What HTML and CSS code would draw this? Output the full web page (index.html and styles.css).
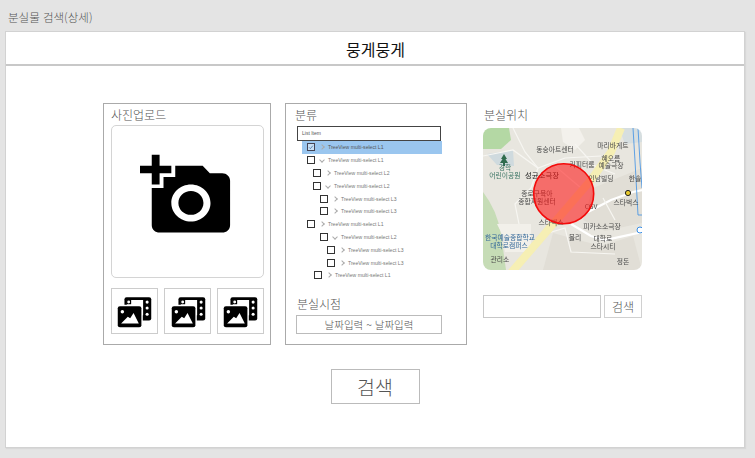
FILE: index.html
```html
<!DOCTYPE html>
<html lang="ko">
<head>
<meta charset="utf-8">
<title>분실물 검색(상세)</title>
<link rel="stylesheet" href="styles.css">
</head>
<body>
<div class="page-label">분실물 검색(상세)</div>
<main class="card">
  <header class="card-head">뭉게뭉게</header>
  <div class="panels">
    <section class="panel photo">
      <div class="title">사진업로드</div>
      <div class="upload">
        <svg class="camera" viewBox="0 0 24 24" preserveAspectRatio="none"><path d="M3 4V1h2v3h3v2H5v3H3V6H0V4h3zm3 6V7h3V4h7l1.83 2H21c1.1 0 2 .9 2 2v12c0 1.1-.9 2-2 2H5c-1.1 0-2-.9-2-2V10h3zm7 9c2.76 0 5-2.24 5-5s-2.24-5-5-5-5 2.24-5 5 2.24 5 5 5zm-3.2-5c0 1.77 1.43 3.2 3.2 3.2s3.2-1.43 3.2-3.2-1.43-3.2-3.2-3.2-3.2 1.43-3.2 3.2z"/></svg>
      </div>
      <div class="thumbs">
        <div class="thumb"><svg viewBox="0 0 47 46"><use href="#media"/></svg></div>
        <div class="thumb"><svg viewBox="0 0 47 46"><use href="#media"/></svg></div>
        <div class="thumb"><svg viewBox="0 0 47 46"><use href="#media"/></svg></div>
      </div>
    </section>

    <section class="panel category">
      <div class="title tight">분류</div>
      <div class="list-item">List Item</div>
      <div class="tree">
        <div class="row lv1 selected"><span class="box checked"><svg viewBox="0 0 8 8"><path d="M1.5 4.5l1.7 1.7 3.3-4" /></svg></span><span class="slot"><i class="chev right"></i></span><span>TreeView multi-select L1</span></div>
        <div class="row lv1"><span class="box"></span><span class="slot"><i class="chev down"></i></span><span>TreeView multi-select L1</span></div>
        <div class="row lv2"><span class="box"></span><span class="slot"><i class="chev right"></i></span><span>TreeView multi-select L2</span></div>
        <div class="row lv2"><span class="box"></span><span class="slot"><i class="chev down"></i></span><span>TreeView multi-select L2</span></div>
        <div class="row lv3"><span class="box"></span><span class="slot"><i class="chev right"></i></span><span>TreeView multi-select L3</span></div>
        <div class="row lv3"><span class="box"></span><span class="slot"><i class="chev right"></i></span><span>TreeView multi-select L3</span></div>
        <div class="row lv1"><span class="box"></span><span class="slot"><i class="chev right"></i></span><span>TreeView multi-select L1</span></div>
        <div class="row lv3"><span class="box"></span><span class="slot"><i class="chev down"></i></span><span>TreeView multi-select L2</span></div>
        <div class="row lv4"><span class="box"></span><span class="slot"><i class="chev right"></i></span><span>TreeView multi-select L3</span></div>
        <div class="row lv4"><span class="box"></span><span class="slot"><i class="chev right"></i></span><span>TreeView multi-select L3</span></div>
        <div class="row lv5"><span class="box"></span><span class="slot"><i class="chev right"></i></span><span>TreeView multi-select L1</span></div>
      </div>
      <div class="title when">분실시점</div>
      <div class="date-range">날짜입력 ~ 날짜입력</div>
    </section>

    <section class="location">
      <div class="title loc-title">분실위치</div>
      <div class="map">
        <svg viewBox="0 0 159 142">
          <rect class="m-land" width="159" height="142"/>
          <path class="m-block" d="M110 60L159 40V95L122 103L100 92Z"/>
          <path class="m-block" d="M70 105L118 118L150 108L159 142H60Z"/>
          <path class="m-green" d="M0 0H26L28 12L18 21H0Z"/>
          <path class="m-green2" d="M0 64Q14 82 18 106L23 142H0Z"/>
          <path class="m-water" d="M4 26L30 22L31 38L14 37Z"/>
          <path class="m-campus" d="M14 96H48V124H22L20 108Z"/>
          <path class="m-light" d="M78 0L96 0L102 12L92 22L80 14Z"/>
          <path class="m-tint" d="M136 0H159V14L142 16Z"/>
          <path class="m-road" d="M0 28L30 22L55 40L82 30L118 28"/>
          <path class="m-road" d="M30 0L42 24L55 40L48 60L32 76L36 96"/>
          <path class="m-road" d="M92 16L112 38L132 46"/>
          <path class="m-road" d="M72 38L98 60"/>
          <path class="m-road wide" d="M105 84L128 72L150 64L159 62"/>
          <path class="m-road wide" d="M88 96L108 108L122 112L159 104"/>
          <path class="m-road" d="M62 106L82 100L88 124L132 126"/>
          <path class="m-road" d="M120 70L132 92"/>
          <path class="m-yellow" d="M27 146L108 52L128 24L138 0"/>
          <path class="m-blue" d="M150 0L152 33L155 87H159"/>
          <path class="m-blue" d="M155 0L157 34L159 60"/>
          <circle class="m-pin" cx="157" cy="102" r="3"/>
          <path class="m-tree" d="M21 26l3 5h-1.500l2.500 4h-3v3h-2v-3h-3l2.500-4h-1.500z"/>
          <circle class="m-cafe" cx="145" cy="65" r="2.600"/>
          <text class="m-t" x="72" y="24">동숭아트센터</text>
          <text class="m-t" x="130" y="20">마리바게트</text>
          <text class="m-t" x="128" y="33">혜오름</text>
          <text class="m-t" x="128" y="40">예술극장</text>
          <text class="m-t" x="99" y="39">커피터룸</text>
          <text class="m-t" x="118" y="53">인남빌딩</text>
          <text class="m-t" x="152" y="53">한솔</text>
          <text class="m-t park" x="22" y="42">경학</text>
          <text class="m-t park" x="22" y="50">어린이공원</text>
          <text class="m-t strong" x="59" y="50">성균소극장</text>
          <text class="m-t" x="54" y="68">종로구육아</text>
          <text class="m-t" x="54" y="76">종합지원센터</text>
          <text class="m-t" x="108" y="81">CGV</text>
          <text class="m-t" x="143" y="77">스타벅스</text>
          <text class="m-t" x="68" y="97">스타벅스</text>
          <text class="m-t" x="119" y="101">피카소소극장</text>
          <text class="m-t campus" x="27" y="112">한국예술종합학교</text>
          <text class="m-t campus" x="26" y="120">대학로캠퍼스</text>
          <text class="m-t" x="92" y="112">몰리</text>
          <text class="m-t" x="120" y="113">대학로</text>
          <text class="m-t" x="120" y="121">스타시티</text>
          <text class="m-t" x="17" y="134">관리소</text>
          <text class="m-t" x="140" y="136">정돈</text>
          <circle class="m-area" cx="80.7" cy="65.7" r="30"/>
        </svg>
      </div>
      <div class="map-search">
        <input class="map-input" type="text" aria-label="분실위치">
        <button class="map-button" type="button">검색</button>
      </div>
    </section>
  </div>
  <div class="actions"><button class="search" type="button">검색</button></div>
</main>
<svg class="defs" aria-hidden="true">
  <defs>
    <g id="media">
      <rect x="13" y="8.500" width="28" height="24.500" rx="2.200"/>
      <rect class="cut" x="15.500" y="11.500" width="17" height="16"/>
      <rect x="15" y="11" width="5" height="5"/>
      <circle class="cut" cx="17.400" cy="13.600" r="1.500"/>
      <circle class="cut" cx="36.700" cy="13.700" r="1.600"/>
      <circle class="cut" cx="36.700" cy="19.800" r="1.600"/>
      <circle class="cut" cx="36.700" cy="26.300" r="1.600"/>
      <rect class="cut" x="4.500" y="16.500" width="27.700" height="25" rx="3"/>
      <rect x="6" y="18" width="24.700" height="22" rx="2.200"/>
      <circle class="cut" cx="10.800" cy="23.700" r="1.800"/>
      <path class="cut" d="M9.500 36L16.500 29L19 30.500L22.500 25L28 36Z"/>
    </g>
  </defs>
</svg>
</body>
</html>
```
FILE: styles.css
```css
* { box-sizing: border-box; }
html, body { height: 100%; }
body {
  margin: 0;
  padding: 0 10px 10px 5px;
  background: #e4e4e4;
  font-family: "Noto Sans CJK KR", "Liberation Sans", sans-serif;
  font-weight: 300;
  color: #555;
  overflow: hidden;
}
.page-label {
  height: 31px;
  padding: 9px 0 0 3px;
  font-size: 11.5px;
  line-height: 16px;
  color: #555;
}
.card {
  height: 417px;
  background: #fff;
  border: 1px solid #d2d2d2;
  box-shadow: 1px 1px 1px #d8d8d8;
}
.card-head {
  height: 34px;
  border-bottom: 2px solid #c8c8c8;
  padding-left: 1px;
  text-align: center;
  font-size: 16px;
  line-height: 34px;
  font-weight: 400;
  color: #111;
}
.panels {
  display: flex;
  align-items: flex-start;
  padding: 37px 0 0 97px;
}
.panel {
  height: 242px;
  border: 1px solid #aaa;
}
.title {
  font-size: 12px;
  line-height: 21px;
  color: #555;
}
.photo {
  width: 168px;
  padding: 0 6px 0 7px;
  margin-right: 14px;
}
.upload {
  height: 153px;
  border: 1px solid #d4d4d4;
  border-radius: 5px;
  display: flex;
  align-items: center;
  justify-content: center;
  padding: 0 1px 13px 0;
}
.camera { width: 94px; height: 89px; fill: #000; }
.thumbs {
  display: grid;
  grid-template-columns: repeat(3, minmax(0, 1fr));
  gap: 6px;
  margin-top: 10px;
}
.thumb { height: 46px; border: 1px solid #ccc; overflow: hidden; }
.thumb svg { display: block; width: 45px; height: 44px; }
.thumb:nth-child(2) svg { margin-left: 1px; }

.category {
  width: 182px;
  padding: 0 24px 0 11px;
  margin-right: 16px;
}
.tight { margin-left: -2px; line-height: 22px; }
.list-item {
  width: 144px;
  height: 15px;
  border: 1px solid #444;
  padding-left: 4px;
  font-family: "Liberation Sans", sans-serif;
  font-size: 5px;
  line-height: 13px;
  color: #555;
}
.tree { margin-left: 5px; width: 140px; }
.row {
  height: 12.8px;
  display: flex;
  align-items: center;
  font-family: "Liberation Sans", sans-serif;
  font-size: 5.1px;
  color: #777;
  white-space: nowrap;
}
.lv1 { padding-left: 5px; }
.lv2 { padding-left: 11px; }
.lv3 { padding-left: 18px; }
.lv4 { padding-left: 25px; }
.lv5 { padding-left: 12px; }
.selected { background: #9ac6ef; color: #555; }
.box { width: 8px; height: 8px; border: 1px solid #333; flex: none; }
.box svg { display: block; width: 6px; height: 6px; fill: none; stroke: #3f6f9f; stroke-width: 1; }
.checked { background: #c7dff5; border-color: #445; }
.slot { width: 13px; flex: none; display: flex; justify-content: center; align-items: center; }
.chev { display: block; width: 4px; height: 4px; border-top: 0.5px solid #aaa; border-right: 0.5px solid #aaa; }
.right { transform: rotate(45deg); }
.down { transform: rotate(135deg); }
.when { margin-top: 13px; line-height: 18px; }
.date-range {
  width: 146px;
  height: 19px;
  margin: 2px 0 0 -1px;
  border: 1px solid #bbb;
  text-align: center;
  font-size: 10.5px;
  line-height: 17px;
  color: #555;
}
.location { width: 159px; }
.loc-title { height: 25px; line-height: 24px; padding-left: 1px; }
.map {
  height: 142px;
  border-radius: 8px;
  overflow: hidden;
}
.map svg { display: block; width: 159px; height: 142px; filter: blur(0.45px); }
.m-land { fill: #e8e6df; }
.m-block { fill: #e1ded6; }
.m-green { fill: #b4d8a4; }
.m-green2 { fill: #c6dcb6; }
.m-water { fill: #cfdade; }
.m-campus { fill: #f2f0ea; }
.m-light { fill: #f3f1ec; }
.m-tint { fill: #d6dee0; }
.m-road { fill: none; stroke: #f7f6f2; stroke-width: 1.2; }
.wide { stroke-width: 2.2; stroke: #fff; }
.m-yellow { fill: none; stroke: #f6efb4; stroke-width: 8; }
.m-blue { fill: none; stroke: #3b8fe6; stroke-width: 0.8; }
.m-pin { fill: #fff; stroke: #3b8fe6; stroke-width: 1; }
.m-tree { fill: #2e6b4d; }
.m-cafe { fill: #e8c92c; stroke: #222; stroke-width: 1; }
.m-t {
  font-family: "Noto Sans CJK KR", sans-serif;
  font-size: 6.8px;
  font-weight: 400;
  fill: #4a4a4a;
  text-anchor: middle;
}
.park { fill: #3a7464; }
.campus { fill: #33689a; }
.strong { fill: #222; font-size: 7.4px; }
.m-area { fill: rgba(255, 20, 20, 0.58); stroke: #f40a0a; stroke-width: 1.6; }
.map-search { display: flex; gap: 3px; margin-top: 25px; }
.map-input {
  width: 118px;
  height: 23px;
  border: 1px solid #c8c8c8;
  background: #fff;
  padding: 0;
}
.map-button {
  width: 38px;
  height: 23px;
  border: 1px solid #d0d0d0;
  background: #fff;
  padding: 0;
  font-family: inherit;
  font-weight: 300;
  font-size: 12px;
  color: #555;
}
.actions { display: flex; justify-content: center; margin-top: 24px; }
.search {
  width: 89px;
  height: 35px;
  border: 1px solid #bbb;
  background: #fff;
  padding: 0;
  font-family: inherit;
  font-weight: 300;
  font-size: 19.5px;
  color: #555;
}
.defs { position: absolute; width: 0; height: 0; }
.cut { fill: #fff; }
```
